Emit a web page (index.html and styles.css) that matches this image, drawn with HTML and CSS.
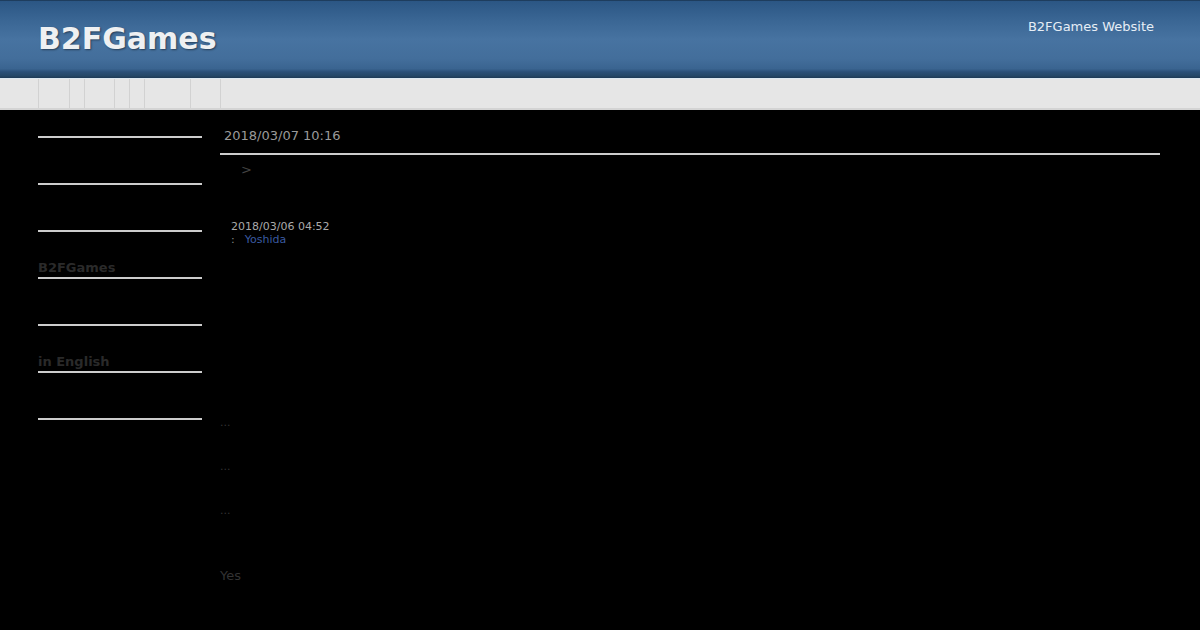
FILE: index.html
```html
<!DOCTYPE html>
<html>
<head>
<meta charset="utf-8">
<title>B2FGames</title>
<link rel="stylesheet" href="styles.css">
</head>
<body>
<header class="header">
  <h1 class="site-title">B2FGames</h1>
  <div class="site-desc">B2FGames Website</div>
</header>
<nav class="nav">
  <ul class="nav-list">
    <li class="nav-item w31"></li>
    <li class="nav-item w15"></li>
    <li class="nav-item w30"></li>
    <li class="nav-item w15"></li>
    <li class="nav-item w15"></li>
    <li class="nav-item w46"></li>
    <li class="nav-item w31"></li>
  </ul>
</nav>
<div class="page">
  <aside class="sidebar">
    <h3 class="side-title"></h3>
    <h3 class="side-title"></h3>
    <h3 class="side-title"></h3>
    <h3 class="side-title">B2FGames</h3>
    <h3 class="side-title"></h3>
    <h3 class="side-title">in English</h3>
    <h3 class="side-title"></h3>
  </aside>
  <main class="main">
    <h2 class="entry-date">2018/03/07 10:16</h2>
    <div class="entry-body">
      <p class="crumb">&gt;</p>
      <div class="meta">
        <div class="meta-date">2018/03/06 04:52</div>
        <div class="meta-author">:<a class="author" href="#">Yoshida</a></div>
      </div>
    </div>
    <div class="more">
      <p class="dots">...</p>
      <p class="dots">...</p>
      <p class="dots">...</p>
    </div>
    <p class="yes">Yes</p>
  </main>
</div>
</body>
</html>
```
FILE: styles.css
```css
* { box-sizing: border-box; }
html, body {
  margin: 0;
  padding: 0;
  background: #000;
  font-family: "DejaVu Sans", "Liberation Sans", sans-serif;
}
.header {
  height: 78px;
  display: flex;
  justify-content: space-between;
  align-items: flex-start;
  padding: 0 46px 0 38px;
  border-top: 1px solid #1e3d5e;
  background: linear-gradient(to bottom,
    #2b5684 0%, #3a6694 25%, #4773a1 50%, #436e9b 75%, #3a6490 88%,
    #2a5078 92%, #254868 97%, #1d3a56 100%);
}
.site-title {
  margin: 20px 0 0 0;
  font-size: 30px;
  line-height: 36px;
  font-weight: bold;
  color: #eef0f2;
  text-shadow: 1px 1px 2px rgba(0,0,0,0.45);
}
.site-desc {
  margin-top: 17px;
  font-size: 13px;
  line-height: 18px;
  color: #e6eef6;
}
.nav {
  height: 32px;
  background: #e6e6e6;
  border-top: 1px solid #dce8f0;
  border-bottom: 2px solid #d4d4d4;
  padding-left: 38px;
}
.nav-list {
  list-style: none;
  margin: 0;
  padding: 0;
  display: flex;
  height: 100%;
}
.nav-item {
  height: 100%;
  border-left: 1px solid #d2d2d2;
}
.nav-item:last-child { border-right: 1px solid #d2d2d2; }
.w31 { width: 31px; }
.w15 { width: 15px; }
.w30 { width: 30px; }
.w46 { width: 46px; }
.page {
  display: flex;
  gap: 18px;
  padding: 0 40px 0 38px;
}
.sidebar {
  width: 164px;
  flex: none;
  padding-top: 9px;
}
.side-title {
  margin: 0 0 28px 0;
  width: 100%;
  min-height: 19px;
  font-size: 13px;
  line-height: 16px;
  font-weight: bold;
  color: #2a2a2a;
  border-bottom: 2px solid #cccccc;
  padding-bottom: 1px;
}
.main {
  flex: 1;
  padding-top: 17px;
}
.entry-date {
  margin: 0;
  padding: 0 0 8px 4px;
  font-size: 13px;
  line-height: 18px;
  font-weight: normal;
  color: #9a9a9a;
  border-bottom: 2px solid #cccccc;
}
.entry-body { padding-left: 11px; }
.crumb {
  margin: 6px 0 0 10px;
  font-size: 13px;
  line-height: 18px;
  color: #444;
}
.meta {
  margin-top: 41px;
  font-size: 11px;
  line-height: 13px;
  color: #aaaaaa;
}
.meta-author { color: #888; }
.author {
  margin-left: 10px;
  color: #3a5aa0;
  text-decoration: none;
}
.more { margin-top: 168px; }
.dots {
  margin: 0 0 26px 0;
  font-size: 11px;
  line-height: 18px;
  color: #333;
}
.yes {
  margin: 47px 0 0 0;
  font-size: 13px;
  line-height: 18px;
  color: #333;
}
```
